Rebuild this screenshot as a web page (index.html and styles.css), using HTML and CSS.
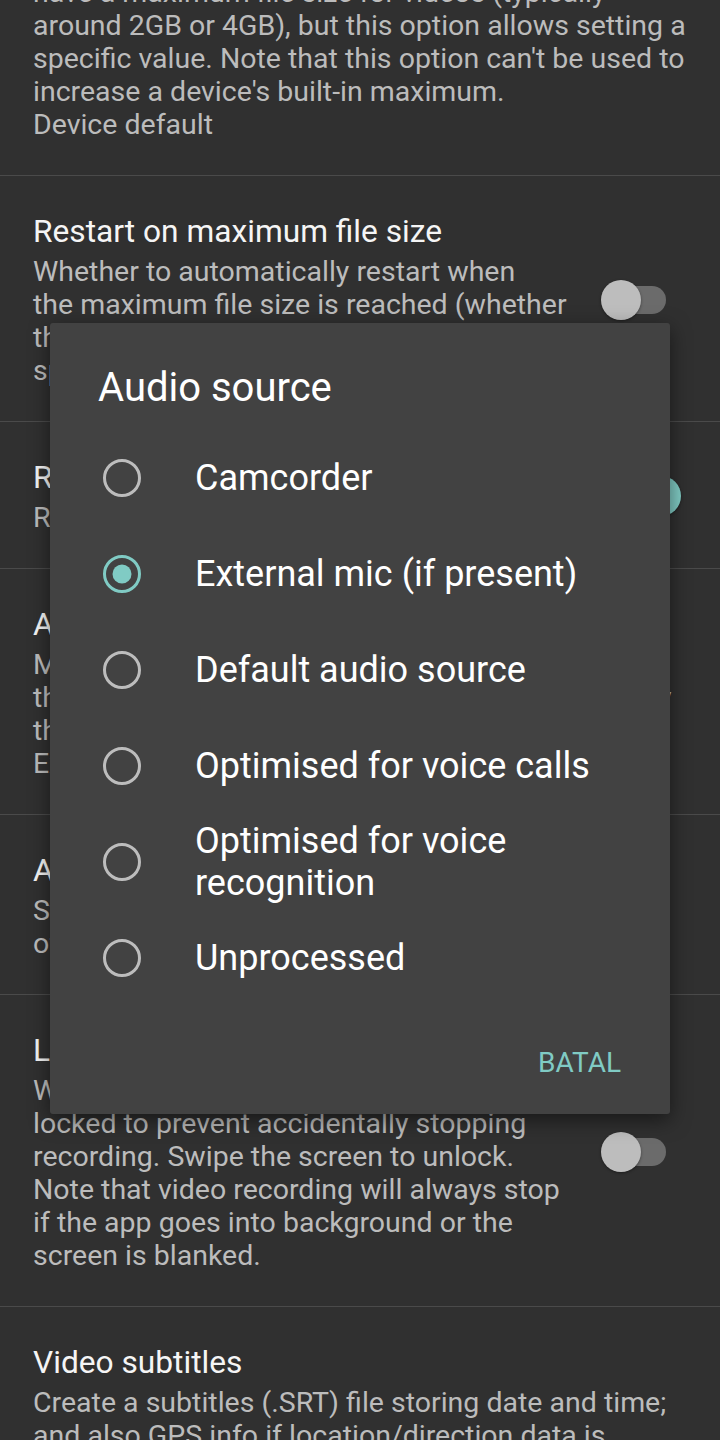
FILE: index.html
```html
<!DOCTYPE html>
<html lang="en">
<head>
  <meta charset="UTF-8" />
  <meta name="viewport" content="width=device-width, initial-scale=1.0"/>
  <title>Video settings</title>
  <link rel="stylesheet" href="styles.css">
</head>
<body>
  <div class="prefs">
    <!-- scrolled part of "Maximum file size" -->
    <div class="pref first">
      <div class="pref-text">
        <div class="pref-summary">have a maximum file size for videos (typically<br>around 2GB or 4GB), but this option allows setting a<br>specific value. Note that this option can't be used to<br>increase a device's built-in maximum.<br>Device default</div>
      </div>
    </div>

    <div class="pref">
      <div class="pref-text">
        <div class="pref-title">Restart on maximum file size</div>
        <div class="pref-summary">Whether to automatically restart when<br>the maximum file size is reached (whether<br>this is the device's maximum, or the one<br>specified above)</div>
      </div>
      <div class="switch"><div class="track"></div><div class="thumb"></div></div>
    </div>

    <div class="pref">
      <div class="pref-text">
        <div class="pref-title">Record audio</div>
        <div class="pref-summary">Record audio when recording video</div>
      </div>
      <div class="switch on"><div class="track"></div><div class="thumb"></div></div>
    </div>

    <div class="pref">
      <div class="pref-text">
        <div class="pref-title">Audio source</div>
        <div class="pref-summary">Microphone source to use when recording;<br>the audio quality and its behaviour can vary greatly<br>the external mic is only used if plugged in.<br>External mic (if present)</div>
      </div>
    </div>

    <div class="pref">
      <div class="pref-text">
        <div class="pref-title">Audio channels</div>
        <div class="pref-summary">Stereo is only supported on some<br>of the devices</div>
      </div>
    </div>

    <div class="pref">
      <div class="pref-text">
        <div class="pref-title">Lock screen when recording video</div>
        <div class="pref-summary">When recording video, the screen will be<br>locked to prevent accidentally stopping<br>recording. Swipe the screen to unlock.<br>Note that video recording will always stop<br>if the app goes into background or the<br>screen is blanked.</div>
      </div>
      <div class="switch"><div class="track"></div><div class="thumb"></div></div>
    </div>

    <div class="pref">
      <div class="pref-text">
        <div class="pref-title">Video subtitles</div>
        <div class="pref-summary">Create a subtitles (.SRT) file storing date and time;<br>and also GPS info if location/direction data is<br>available</div>
      </div>
    </div>
  </div>

  <!-- Audio source dialog -->
  <div class="dialog">
    <div class="dialog-title">Audio source</div>
    <div class="options">
      <div class="option">
        <svg class="radio" width="40" height="40" viewBox="0 0 40 40"><circle cx="20" cy="20" r="17.5" fill="none" stroke="#bdbdbd" stroke-width="3"/></svg>
        <span class="option-label">Camcorder</span>
      </div>
      <div class="option">
        <svg class="radio" width="40" height="40" viewBox="0 0 40 40"><circle cx="20" cy="20" r="17.5" fill="none" stroke="#80cbc4" stroke-width="3"/><circle cx="20" cy="20" r="9.5" fill="#80cbc4"/></svg>
        <span class="option-label">External mic (if present)</span>
      </div>
      <div class="option">
        <svg class="radio" width="40" height="40" viewBox="0 0 40 40"><circle cx="20" cy="20" r="17.5" fill="none" stroke="#bdbdbd" stroke-width="3"/></svg>
        <span class="option-label">Default audio source</span>
      </div>
      <div class="option">
        <svg class="radio" width="40" height="40" viewBox="0 0 40 40"><circle cx="20" cy="20" r="17.5" fill="none" stroke="#bdbdbd" stroke-width="3"/></svg>
        <span class="option-label">Optimised for voice calls</span>
      </div>
      <div class="option">
        <svg class="radio" width="40" height="40" viewBox="0 0 40 40"><circle cx="20" cy="20" r="17.5" fill="none" stroke="#bdbdbd" stroke-width="3"/></svg>
        <span class="option-label">Optimised for voice recognition</span>
      </div>
      <div class="option">
        <svg class="radio" width="40" height="40" viewBox="0 0 40 40"><circle cx="20" cy="20" r="17.5" fill="none" stroke="#bdbdbd" stroke-width="3"/></svg>
        <span class="option-label">Unprocessed</span>
      </div>
    </div>
    <div class="dialog-actions">
      <button class="text-button">BATAL</button>
    </div>
  </div>
</body>
</html>
```

FILE: styles.css
```css
body {
  margin: 0;
  background-color: #303030;
  font-family: Roboto, "Noto Sans", sans-serif;
  color: #f5f5f5;
  overflow: hidden;
  height: 1440px;
}

.prefs {
  display: flex;
  flex-direction: column;
}
.pref {
  display: flex;
  align-items: center;
  padding: 36px 39px 34px 33px;
  border-bottom: 1px solid #4a4a4a;
}
.pref.first {
  margin-top: -24px;
  padding-top: 0;
  padding-bottom: 34px;
}
.pref-text {
  flex: 1;
  min-width: 0;
}
.pref-title {
  font-size: 31.7px;
  line-height: 40px;
  margin-bottom: 3px;
  color: #f5f5f5;
  white-space: nowrap;
}
.pref-summary {
  font-size: 28.5px;
  line-height: 33px;
  color: #bcbcbc;
  white-space: nowrap;
}

.switch {
  position: relative;
  width: 80px;
  height: 40px;
  flex-shrink: 0;
}
.track {
  position: absolute;
  left: 6px;
  right: 15px;
  top: 6px;
  height: 28px;
  border-radius: 14px;
  background-color: #6b6b6b;
}
.thumb {
  position: absolute;
  left: 0;
  top: 0;
  width: 40px;
  height: 40px;
  border-radius: 50%;
  background-color: #bdbdbd;
  box-shadow: 0 1px 3px rgba(0, 0, 0, 0.4);
}
.switch.on .track {
  background-color: #4f7f7b;
}
.switch.on .thumb {
  left: 40px;
  background-color: #80cbc4;
}

.dialog {
  position: absolute;
  left: 50px;
  top: 323px;
  width: 620px;
  height: 791px;
  box-sizing: border-box;
  padding-top: 41px;
  background-color: #424242;
  border-radius: 3px;
  box-shadow: 0 6px 20px rgba(0, 0, 0, 0.5);
  display: flex;
  flex-direction: column;
}
.dialog-title {
  font-size: 40px;
  line-height: 48px;
  padding-left: 48px;
  margin-bottom: 18px;
  color: #ffffff;
}
.options {
  display: flex;
  flex-direction: column;
}
.option {
  display: flex;
  align-items: center;
  min-height: 96px;
  padding-left: 52px;
  padding-right: 48px;
  gap: 53px;
}
.radio {
  flex-shrink: 0;
}
.option-label {
  font-size: 36px;
  line-height: 42px;
  color: #ffffff;
}
.dialog-actions {
  display: flex;
  justify-content: flex-end;
  margin-top: 20px;
  padding-right: 33px;
}
.text-button {
  height: 72px;
  padding: 0 16px;
  border: none;
  background: transparent;
  font-family: Roboto, sans-serif;
  font-size: 28px;
  color: #80cbc4;
}
```
